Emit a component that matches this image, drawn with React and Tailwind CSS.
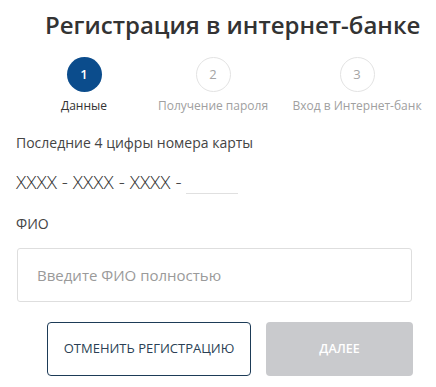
import React from "react";

function Step({ n, label, active, className }) {
  return (
    <div className={"flex flex-col items-center " + className}>
      <div
        className={
          "w-[35px] h-[35px] rounded-full flex items-center justify-center text-[13px] " +
          (active
            ? "bg-[#0b4c8c] text-white font-semibold"
            : "bg-white border border-[#e3e3e3] text-[#a5a5a5]")
        }
      >
        {n}
      </div>
      <div
        className={
          "mt-[6px] text-[12px] leading-[16px] whitespace-nowrap " +
          (active ? "text-[#333]" : "text-[#a0a0a0]")
        }
      >
        {label}
      </div>
    </div>
  );
}

export default function App() {
  return (
    <div
      className="w-[436px] h-[387px] bg-white overflow-hidden"
      style={{ fontFamily: '"Open Sans", sans-serif' }}
    >
      <h1 className="pt-[9px] pl-[45px] text-[24px] leading-[32px] font-semibold text-[#333] whitespace-nowrap">
        Регистрация в интернет-банке
      </h1>
      <div className="flex mt-[16px]">
        <Step n="1" label="Данные" active className="ml-[34px] w-[100px]" />
        <Step n="2" label="Получение пароля" className="ml-[29px] w-[100px]" />
        <Step n="3" label="Вход в Интернет-банк" className="ml-[30px] w-[128px]" />
      </div>
      <div className="pl-[16px] mt-[20px] text-[14px] leading-[18px] text-[#444]">
        Последние 4 цифры номера карты
      </div>
      <div className="pl-[16px] mt-[18px] flex items-end">
        <span className="text-[19px] leading-[24px] font-light text-[#333]">
          XXXX - XXXX - XXXX -
        </span>
        <div className="ml-[4px] w-[52px] h-[1px] bg-[#e0e0e0] mb-[0px]"></div>
      </div>
      <div className="pl-[16px] mt-[21px] text-[14px] leading-[18px] text-[#444]">
        ФИО
      </div>
      <div className="ml-[17px] mt-[15px] w-[395px] h-[54px] border border-[#dedede] rounded-[3px] flex items-center pl-[19px] text-[15px] text-[#9a9a9a]">
        Введите ФИО полностью
      </div>
      <div className="flex mt-[20px] ml-[47px] gap-[15px]">
        <button className="w-[204px] h-[54px] border border-[#1d3b57] rounded-[4px] text-[13px] text-[#2a3f55] bg-white">
          ОТМЕНИТЬ РЕГИСТРАЦИЮ
        </button>
        <button className="w-[147px] h-[54px] rounded-[4px] bg-[#c9cacd] text-white text-[12.5px] font-semibold">
          ДАЛЕЕ
        </button>
      </div>
    </div>
  );
}
